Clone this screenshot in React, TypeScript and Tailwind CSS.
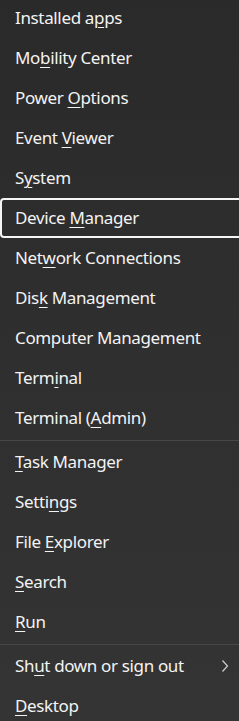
import React from "react";

type Item = { pre: string; u?: string; post?: string; sep?: boolean; focus?: boolean; sub?: boolean };

const items: Item[] = [
  { pre: "Installed a", u: "p", post: "ps" },
  { pre: "Mo", u: "b", post: "ility Center" },
  { pre: "Power ", u: "O", post: "ptions" },
  { pre: "Event ", u: "V", post: "iewer" },
  { pre: "S", u: "y", post: "stem" },
  { pre: "Device ", u: "M", post: "anager", focus: true },
  { pre: "Net", u: "w", post: "ork Connections" },
  { pre: "Dis", u: "k", post: " Management" },
  { pre: "Computer Management" },
  { pre: "Term", u: "i", post: "nal" },
  { pre: "Terminal (", u: "A", post: "dmin)", sep: true },
  { pre: "", u: "T", post: "ask Manager" },
  { pre: "Setti", u: "n", post: "gs" },
  { pre: "File ", u: "E", post: "xplorer" },
  { pre: "", u: "S", post: "earch" },
  { pre: "", u: "R", post: "un", sep: true },
  { pre: "Sh", u: "u", post: "t down or sign out", sub: true },
  { pre: "", u: "D", post: "esktop" },
];

export default function App() {
  return (
    <div
      className="w-[239px] h-[721px] overflow-hidden bg-linear-to-b from-[#2a2a2a] to-[#343434] text-[#f3f3f3]"
      style={{ fontFamily: '"Noto Sans", "Open Sans", sans-serif' }}
    >
      <div className="-mt-[2px] flex flex-col">
        {items.map((it, i) => (
          <React.Fragment key={i}>
            <div
              className={
                it.focus
                  ? "relative flex h-[40px] items-center rounded-[4px] border-2 border-[#f5f5f5] -mr-[4px] pl-[13px] pr-[14px] text-[17px]"
                  : "relative flex h-[40px] items-center pl-[15px] pr-[9px] text-[17px]"
              }
            >
              <span className="whitespace-nowrap tracking-[-0.35px]">
                {it.pre}
                {it.u && (
                  <span className="underline decoration-1 underline-offset-[3px]">{it.u}</span>
                )}
                {it.post}
              </span>
              {it.sub && (
                <svg className="ml-auto h-[16px] w-[10px]" viewBox="0 0 10 16" fill="none">
                  <path d="M2.5 2.5 L7.5 8 L2.5 13.5" stroke="#d0d0d0" strokeWidth="1.2" />
                </svg>
              )}
            </div>
            {it.sep && (
              <div className="flex h-[4px] items-center">
                <div className="h-px w-full bg-[#474747]" />
              </div>
            )}
          </React.Fragment>
        ))}
      </div>
    </div>
  );
}
